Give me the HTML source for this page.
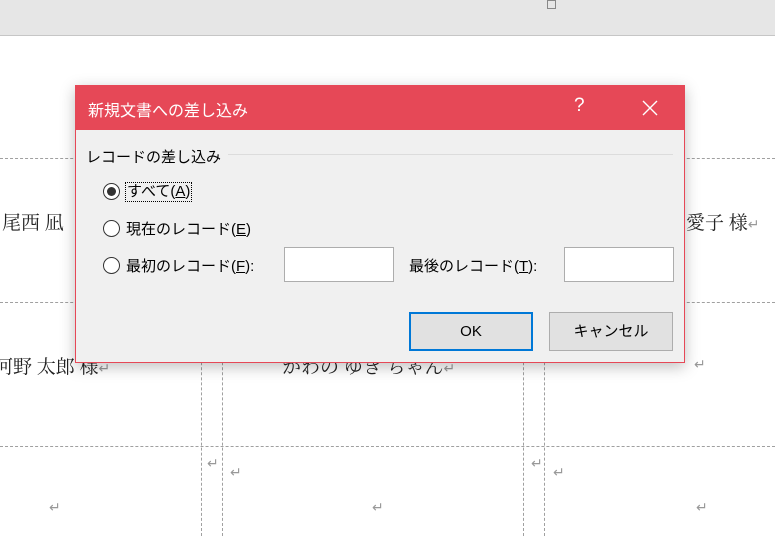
<!DOCTYPE html>
<html><head><meta charset="utf-8"><style>
*{margin:0;padding:0;box-sizing:border-box}
body{width:775px;height:536px;overflow:hidden;background:#fff;position:relative;font-family:"Liberation Sans","Noto Sans CJK JP",sans-serif}
.a{position:absolute}
.hl{position:absolute;left:0;width:775px;border-top:1px dashed #a0a0a0;height:0}
.vl{position:absolute;top:302px;height:234px;border-left:1px dashed #a0a0a0;width:0}
.doc{position:absolute;font-family:"Liberation Serif","Noto Serif CJK JP",serif;font-size:19px;color:#222;white-space:nowrap}
.ret{position:absolute;color:#999;font-size:14px}
.dlg{position:absolute;left:75px;top:85px;width:610px;height:278px;background:#f0f0f0;border:1px solid #e64857;box-shadow:0 4px 14px rgba(0,0,0,.25)}
.tb{position:absolute;left:0;top:0;width:608px;height:44px;background:#e64857;color:#fff;font-size:16px}
.lbl{position:absolute;font-size:15px;color:#000;white-space:nowrap}
.rad{position:absolute;width:17px;height:17px;border:1px solid #333;border-radius:50%;background:#fff}
.inp{position:absolute;width:110px;height:35px;background:#fff;border:1px solid #adadad}
.btn{position:absolute;height:39px;width:124px;background:#e1e1e1;border:1px solid #adadad;font-size:15px;text-align:center;line-height:37px}
</style></head><body>
<div class="a" style="left:0;top:0;width:775px;height:36px;background:#e6e6e6;border-bottom:1px solid #c6c6c6"></div>
<div class="a" style="left:547px;top:0;width:9px;height:9px;border:1px solid #888"></div>
<div class="hl" style="top:158px"></div>
<div class="hl" style="top:302px"></div>
<div class="hl" style="top:446px"></div>
<div class="vl" style="left:201px"></div>
<div class="vl" style="left:222px"></div>
<div class="vl" style="left:523px"></div>
<div class="vl" style="left:544px"></div>
<div class="doc" style="left:2px;top:208px">尾西 凪</div>
<div class="doc" style="left:686px;top:208px">愛子 様<span style="color:#999;font-size:14px">↵</span></div>
<div class="doc" style="left:-6px;top:352px">河野 太郎 様<span style="color:#999;font-size:14px">↵</span></div>
<div class="doc" style="left:282px;top:352px">かわの ゆき ちゃん<span style="color:#999;font-size:14px">↵</span></div>
<div class="ret" style="left:694px;top:356px">↵</div>
<div class="ret" style="left:207px;top:455px">↵</div>
<div class="ret" style="left:230px;top:464px">↵</div>
<div class="ret" style="left:531px;top:455px">↵</div>
<div class="ret" style="left:553px;top:464px">↵</div>
<div class="ret" style="left:49px;top:499px">↵</div>
<div class="ret" style="left:372px;top:499px">↵</div>
<div class="ret" style="left:696px;top:499px">↵</div>
<div class="dlg">
 <div class="tb"><span class="a" style="left:12px;top:11px">新規文書への差し込み</span><span class="a" style="left:498px;top:9px;font-size:19px">?</span>
 <svg class="a" style="left:566px;top:14px" width="16" height="16"><path d="M1 1L15 15M15 1L1 15" stroke="#fff" stroke-width="1.4"/></svg></div>
 <div class="lbl" style="left:10px;top:60px">レコードの差し込み</div>
 <div class="a" style="left:152px;top:68px;width:445px;border-top:1px solid #dcdcdc"></div>
 <div class="rad" style="left:27px;top:97px"><div class="a" style="left:3px;top:3px;width:9px;height:9px;border-radius:50%;background:#333"></div></div>
 <div class="lbl" style="left:49px;top:96px;border:1px dotted #000;padding:0 1px;line-height:18px">すべて(<u>A</u>)</div>
 <div class="rad" style="left:27px;top:134px"></div>
 <div class="lbl" style="left:50px;top:132px">現在のレコード(<u>E</u>)</div>
 <div class="rad" style="left:27px;top:171px"></div>
 <div class="lbl" style="left:50px;top:169px">最初のレコード(<u>F</u>):</div>
 <div class="inp" style="left:208px;top:161px"></div>
 <div class="lbl" style="left:333px;top:169px">最後のレコード(<u>T</u>):</div>
 <div class="inp" style="left:488px;top:161px"></div>
 <div class="btn" style="left:333px;top:226px;border:2px solid #0078d7;line-height:35px">OK</div>
 <div class="btn" style="left:473px;top:226px">キャンセル</div>
</div>
</body></html>
